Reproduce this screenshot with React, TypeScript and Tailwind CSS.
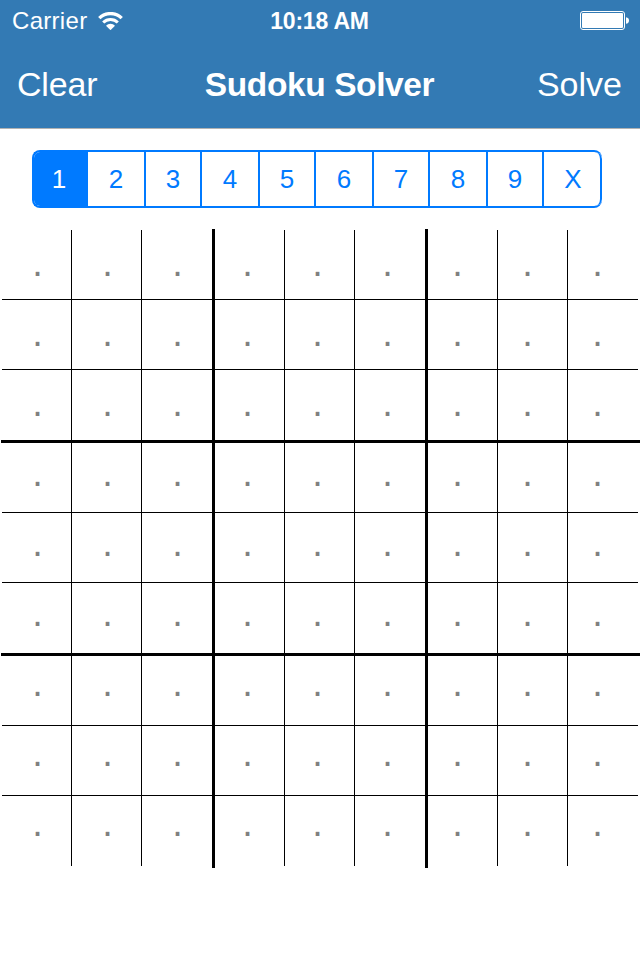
import React from 'react';

const segments = [
  { label: '1', width: 'w-[56px]' },
  { label: '2', width: 'w-[58px]' },
  { label: '3', width: 'w-[56px]' },
  { label: '4', width: 'w-[58px]' },
  { label: '5', width: 'w-[56px]' },
  { label: '6', width: 'w-[58px]' },
  { label: '7', width: 'w-[56px]' },
  { label: '8', width: 'w-[58px]' },
  { label: '9', width: 'w-[56px]' },
  { label: 'X', width: 'w-[58px]' },
];

const indices = Array.from({ length: 9 }, (_, i) => i);

function WifiIcon() {
  return (
    <svg className="ml-[11px] h-[18px] w-[25px]" viewBox="0 0 25 18" fill="none">
      <path d="M1.300 6.200a15.800 15.800 0 0 1 22.400 0" stroke="#fff" strokeWidth="3.300" />
      <path d="M5.200 10.500a10.300 10.300 0 0 1 14.600 0" stroke="#fff" strokeWidth="3" />
      <path d="M8 13.700a6.100 6.100 0 0 1 9 0L12.500 18.200z" fill="#fff" />
    </svg>
  );
}

function BatteryIcon() {
  return (
    <svg className="h-[19px] w-[49px]" viewBox="0 0 49 19" fill="none">
      <rect x="0.5" y="0.5" width="44" height="18" rx="2.5" stroke="#fff" />
      <rect x="2" y="2" width="41" height="15" rx="1" fill="#fff" />
      <path d="M46 6.2c2 .3 3 1.600 3 3.300s-1 3-3 3.300z" fill="#fff" />
    </svg>
  );
}

function StatusBar() {
  return (
    <div className="grid h-10 grid-cols-3 items-center pl-3 pr-[11px] text-[24px] leading-10">
      <div className="flex items-center">
        <span className="w-[75px] whitespace-nowrap pt-px tracking-[0.3px]">Carrier</span>
        <WifiIcon />
      </div>
      <span className="whitespace-nowrap pr-[2px] pt-px text-center text-[23px] font-bold tracking-[-0.2px]">
        10:18 AM
      </span>
      <div className="flex justify-end">
        <BatteryIcon />
      </div>
    </div>
  );
}

function NavBar() {
  return (
    <div className="flex h-[88px] items-center justify-between pl-[17px] pr-[18px] text-[34px]">
      <button className="w-[120px] text-left tracking-[-0.2px]">Clear</button>
      <h1 className="whitespace-nowrap pt-[2px] text-[33.5px] font-bold tracking-[-0.4px]">Sudoku Solver</h1>
      <button className="w-[120px] text-right">Solve</button>
    </div>
  );
}

function DigitPicker() {
  return (
    <div className="ml-8 mt-[21px] flex h-[58px] w-[570px] overflow-hidden rounded-[8px] border-2 border-r-0 border-[#007aff] text-[26px] text-[#007aff]">
      {segments.map(({ label, width }, i) => (
        <button
          key={label}
          className={`${width} flex shrink-0 items-center justify-center border-r-2 border-[#007aff] pt-px ${
            i === 0 ? '-ml-[2px] bg-[#007aff] text-white' : ''
          } ${i === 9 ? 'rounded-r-[7px] pl-[2px]' : ''}`}
        >
          {label}
        </button>
      ))}
    </div>
  );
}

function Board() {
  return (
    <div className="relative mt-[22px] grid h-[636px] w-[640px]">
      <div className="col-start-1 row-start-1 ml-[2px] grid grid-cols-[70px_70px_73px_70px_70px_73px_70px_70px_70px] grid-rows-[70px_70px_73px_70px_70px_73px_70px_70px_70px]">
        {indices.map((r) =>
          indices.map((c) => (
            <div
              key={`${r}-${c}`}
              className={`border-black ${c === 8 ? '' : c % 3 === 2 ? 'border-r-[3px]' : 'border-r'} ${
                r === 8 ? '' : r % 3 === 2 ? 'border-b-[3px]' : 'border-b'
              }`}
            />
          )),
        )}
      </div>
      {/* Box rules run slightly past the thin cell lines */}
      <div className="absolute -top-px left-[212px] h-[639px] w-[3px] bg-black" />
      <div className="absolute -top-px left-[425px] h-[639px] w-[3px] bg-black" />
      <div className="absolute left-px right-0 top-[210px] h-[3px] bg-black" />
      <div className="absolute left-px right-0 top-[423px] h-[3px] bg-black" />
      <div className="z-10 col-start-1 row-start-1 ml-[2.5px] grid grid-cols-[repeat(9,70px)] grid-rows-[repeat(9,70px)] text-[38px] leading-[66px] text-[#808080]">
        {indices.map((r) =>
          indices.map((c) => (
            <span key={`${r}-${c}`} className="text-center">
              .
            </span>
          )),
        )}
      </div>
    </div>
  );
}

export default function App() {
  return (
    <div className="h-[960px] w-[640px] overflow-hidden bg-white font-['Liberation_Sans',Arial,sans-serif]">
      <header className="h-[129px] border-b border-[#b2b2b2] bg-[#337ab4] text-white">
        <StatusBar />
        <NavBar />
      </header>
      <DigitPicker />
      <Board />
    </div>
  );
}
